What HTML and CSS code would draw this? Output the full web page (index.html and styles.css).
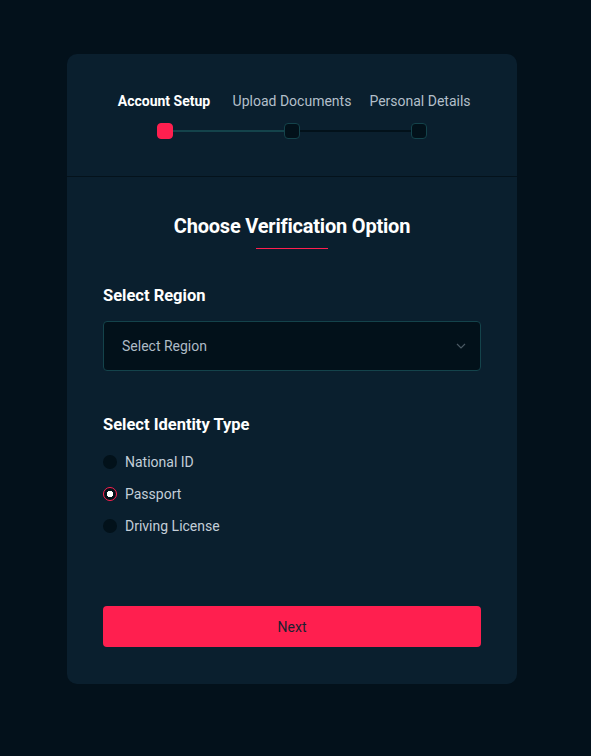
FILE: index.html
```html
<!DOCTYPE html>
<html>
<head>
<meta charset="utf-8">
<link rel="stylesheet" href="styles.css">
</head>
<body>
<div class="card">
  <div class="steps">
    <div class="labels">
      <span class="label active">Account Setup</span>
      <span class="label">Upload Documents</span>
      <span class="label">Personal Details</span>
    </div>
    <div class="track">
      <span class="dot current"></span>
      <span class="line done"></span>
      <span class="dot"></span>
      <span class="line"></span>
      <span class="dot"></span>
    </div>
  </div>
  <div class="body">
    <h1 class="title">Choose Verification Option</h1>
    <div class="underline"></div>
    <h2 class="field-label">Select Region</h2>
    <div class="select">
      <span>Select Region</span>
      <svg class="chev" width="10" height="6" viewBox="0 0 10 6"><path d="M1 1l4 4 4-4" fill="none" stroke="#4a5963" stroke-width="1.2"/></svg>
    </div>
    <h2 class="field-label second">Select Identity Type</h2>
    <div class="radios">
      <label class="radio"><span class="circle"></span>National ID</label>
      <label class="radio"><span class="circle checked"></span>Passport</label>
      <label class="radio"><span class="circle"></span>Driving License</label>
    </div>
    <button class="next">Next</button>
  </div>
</div>
</body>
</html>
```
FILE: styles.css
```css
html, body { margin: 0; padding: 0; }
body {
  background: #03111b;
  font-family: Roboto, "Liberation Sans", sans-serif;
  width: 591px;
  height: 756px;
  overflow: hidden;
}
.card {
  margin: 54px 0 0 67px;
  width: 450px;
  height: 630px;
  background: #0a1f2e;
  border-radius: 10px;
  box-sizing: border-box;
}
.steps {
  padding: 39px 0 37px;
  border-bottom: 1px solid #04121b;
}
.labels {
  display: grid;
  grid-template-columns: 128px 128px 128px;
  justify-content: center;
}
.label {
  text-align: center;
  font-size: 14px;
  line-height: 16px;
  color: #b3bfca;
  white-space: nowrap;
}
.label.active { color: #fff; font-weight: 700; }
.track {
  display: flex;
  align-items: center;
  margin: 14px 0 0 90px;
}
.dot {
  width: 16px;
  height: 16px;
  box-sizing: border-box;
  border-radius: 4px;
  background: #02111a;
  border: 1px solid #14434b;
}
.dot.current { background: #ff1f4f; border-color: #ff1f4f; }
.line { height: 2px; width: 111px; background: #02111a; }
.line.done { background: #14434b; }
.body {
  padding: 37px 36px 37px;
  display: flex;
  flex-direction: column;
}
.title {
  margin: 0;
  text-align: center;
  font-size: 20px;
  line-height: 24px;
  font-weight: 700;
  color: #fff;
  letter-spacing: -0.2px;
}
.underline {
  width: 72px;
  height: 1px;
  background-color: #ff1f4f;
  margin: 10px auto 0;
}
.field-label {
  margin: 37px 0 0;
  font-size: 16.5px;
  line-height: 20px;
  font-weight: 700;
  color: #fff;
}
.field-label.second { margin-top: 44px; }
.select {
  margin-top: 15px;
  height: 50px;
  box-sizing: border-box;
  border: 1px solid #14434b;
  border-radius: 4px;
  background: #02111a;
  display: flex;
  align-items: center;
  justify-content: space-between;
  padding: 0 14px 0 18px;
  font-size: 14px;
  color: #aebbc6;
}
.radios {
  margin-top: 17px;
  display: flex;
  flex-direction: column;
  gap: 12px;
}
.radio {
  display: flex;
  align-items: center;
  gap: 8px;
  font-size: 14px;
  line-height: 20px;
  color: #c3ced8;
}
.circle {
  width: 14px;
  height: 14px;
  box-sizing: border-box;
  border-radius: 50%;
  background: #02111a;
}
.circle.checked {
  border: 1.5px solid #ff1f4f;
  background: radial-gradient(circle, #fff 0 3px, #02111a 3.5px);
}
.next {
  margin-top: 70px;
  height: 41px;
  border: none;
  border-radius: 4px;
  background: #ff1f4f;
  color: #1a2130;
  font-family: Roboto, "Liberation Sans", sans-serif;
  font-size: 14px;
}
```
